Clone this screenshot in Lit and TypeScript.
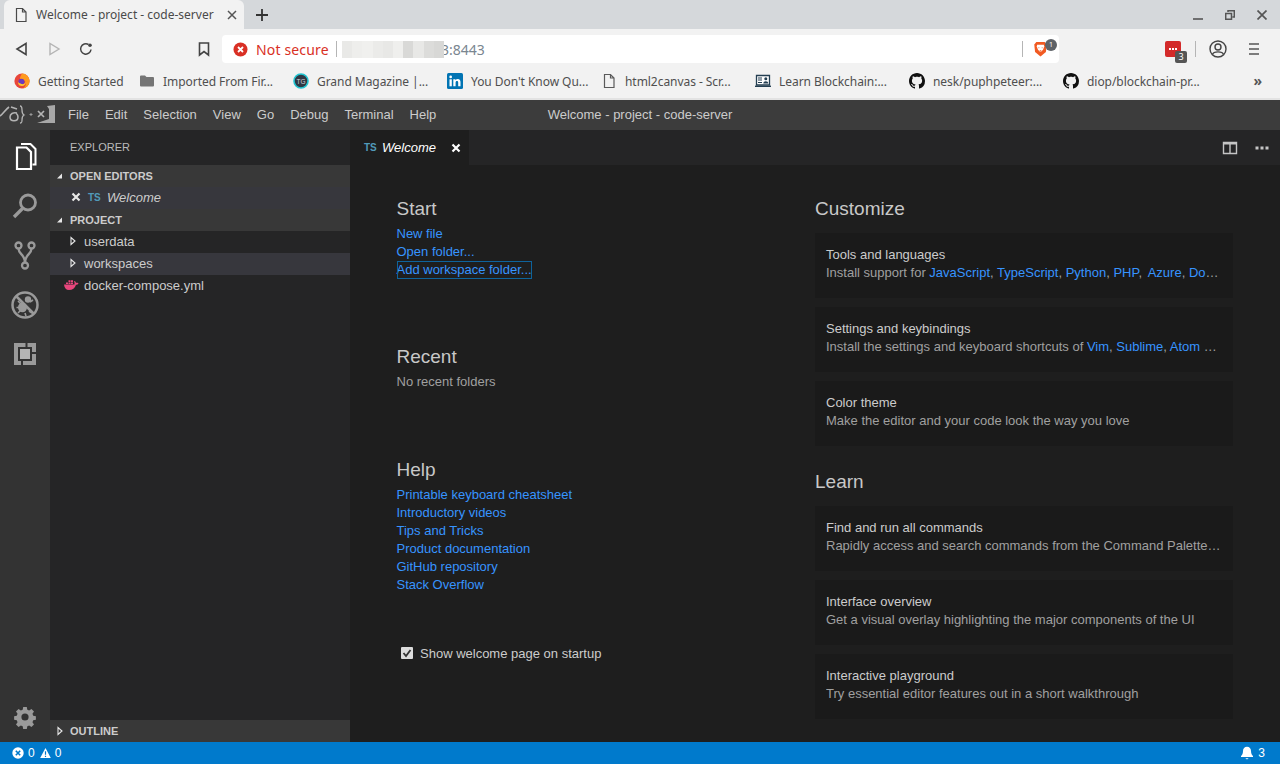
import { LitElement, html, css, svg } from "lit";
import { customElement } from "lit/decorators.js";

const GH = "M8 0C3.58 0 0 3.58 0 8c0 3.54 2.29 6.53 5.47 7.59.4.07.55-.17.55-.38 0-.19-.01-.82-.01-1.49-2.01.37-2.53-.49-2.69-.94-.09-.23-.48-.94-.82-1.13-.28-.15-.68-.52-.01-.53.63-.01 1.08.58 1.23.82.72 1.21 1.87.87 2.33.66.07-.52.28-.87.51-1.07-1.78-.2-3.64-.89-3.64-3.95 0-.87.31-1.59.82-2.15-.08-.2-.36-1.02.08-2.12 0 0 .67-.21 2.2.82.64-.18 1.32-.27 2-.27.68 0 1.36.09 2 .27 1.53-1.04 2.2-.82 2.2-.82.44 1.1.16 1.92.08 2.12.51.56.82 1.27.82 2.15 0 3.07-1.87 3.75-3.65 3.95.29.25.54.73.54 1.48 0 1.07-.01 1.93-.01 2.2 0 .21.15.46.55.38A8.013 8.013 0 0016 8c0-4.42-3.58-8-8-8z";

const doc = (c = "#5a5a5a") => html`<svg width="16" height="16" viewBox="0 0 16 16"><path d="M3.500 1.500h6l3.500 3.500v9.500h-9.500zM9.500 1.500v3.500h3.500" fill="none" stroke=${c} stroke-width="1.200"/></svg>`;

const bmIcons = [
  html`<svg width="16" height="16" viewBox="0 0 16 16"><circle cx="8" cy="8" r="7.600" fill="#e8463a"/><path d="M8 .4a7.600 7.600 0 0 1 7.600 7.600A7.600 7.600 0 0 1 9 15.500C13 13 12.500 8 9 6.500 8 6 6.800 6.500 6 5.500 6 3.500 7 2 8 .4z" fill="#ff9a1f"/><circle cx="7.400" cy="8.800" r="3" fill="#6a3bc0"/><path d="M4 9c0 3 2 4 4 4s4-2 4-4.500c-1 2-2.500 3-4.500 2.500C6 10.500 5 10 4 9z" fill="#ffcb2e"/></svg>`,
  html`<svg width="16" height="16" viewBox="0 0 16 16"><path d="M1 3.500a1 1 0 0 1 1-1h4l1.500 1.500H14a1 1 0 0 1 1 1v7.500a1 1 0 0 1-1 1H2a1 1 0 0 1-1-1z" fill="#757575"/></svg>`,
  html`<svg width="16" height="16" viewBox="0 0 16 16"><circle cx="8" cy="8" r="7" fill="#2f3844" stroke="#21c4d0" stroke-width="1.600"/><text x="8" y="10.500" text-anchor="middle" font-size="6.500" font-family="Liberation Sans" fill="#cfd4da">TG</text></svg>`,
  html`<svg width="16" height="16" viewBox="0 0 16 16"><rect width="16" height="16" rx="1.500" fill="#0274b3"/><rect x="2.500" y="6.300" width="2.300" height="7" fill="#fff"/><circle cx="3.650" cy="3.900" r="1.350" fill="#fff"/><path d="M6.300 6.300h2.200v1c.5-.8 1.300-1.200 2.300-1.200 2 0 2.700 1.300 2.700 3.200v4h-2.300V9.800c0-1-.3-1.700-1.200-1.700-1 0-1.400.7-1.400 1.700v3.500H6.300z" fill="#fff"/></svg>`,
  doc(),
  html`<svg width="16" height="16" viewBox="0 0 16 16"><path d="M1.500 2.500h13v9.500h-13z" fill="#fff" stroke="#243f52" stroke-width="1.300"/><path d="M0 13.300h16" stroke="#243f52" stroke-width="1.400"/><path d="M3 5h4M3 7h4M3 9.500h4" stroke="#243f52" stroke-width="1.200"/><circle cx="10.800" cy="5.800" r="1.500" fill="#243f52"/><path d="M8.300 10.500c0-3 5-3 5 0z" fill="#243f52"/></svg>`,
  html`<svg width="16" height="16" viewBox="0 0 16 16"><path d=${GH} fill="#111"/></svg>`,
  html`<svg width="16" height="16" viewBox="0 0 16 16"><path d=${GH} fill="#111"/></svg>`,
];
const bookmarks = [
  "Getting Started",
  "Imported From Fir...",
  "Grand Magazine |...",
  "You Don't Know Qu...",
  "html2canvas - Scr...",
  "Learn Blockchain:...",
  "nesk/puphpeteer:...",
  "diop/blockchain-pr...",
];
const blur = ["#e9e9e7", "#eeeeec", "#f0f0ee", "#ebebe9", "#e8e8e6", "#efefed", "#d9d9d7", "#e8e8e6", "#dcdcda", "#d8d8d6"];

const chevR = html`<svg class="chev" width="16" height="16" viewBox="0 0 16 16"><path d="M6 4.500v7l4-3.500z" fill="none" stroke="#e8e8e8" stroke-width="1.100"/></svg>`;
const chevD = html`<svg class="chev" width="16" height="16" viewBox="0 0 16 16"><path d="M11 5.500v5H6z" fill="#e8e8e8"/></svg>`;
const xIcon = (c: string) => html`<svg width="12" height="12" viewBox="0 0 12 12"><path d="M2.500 2.500l7 7M9.500 2.500l-7 7" stroke=${c} stroke-width="2.200"/></svg>`;

const ICON = "#9a9a9a";
const activity = [
  svg`<path d="M9 9.500h9.500l4.500 4.500v17H9z" fill="none" stroke="#fff" stroke-width="2.200"/><path d="M13 6h9.500l5 5v15.500h-3" fill="none" stroke="#fff" stroke-width="2"/>`,
  svg`<circle cx="20" cy="14.500" r="7.500" fill="none" stroke="${ICON}" stroke-width="2.800"/><path d="M14.500 20.500l-8.500 8.500" stroke="${ICON}" stroke-width="3.300"/>`,
  svg`<circle cx="10.500" cy="7.500" r="3" fill="none" stroke="${ICON}" stroke-width="2.300"/><circle cx="23.500" cy="7.500" r="3" fill="none" stroke="${ICON}" stroke-width="2.300"/><circle cx="17" cy="27.500" r="3" fill="none" stroke="${ICON}" stroke-width="2.300"/><path d="M10.500 10.500c0 6 6.500 5.500 6.500 14.500M23.500 10.500c0 6-6.500 5.500-6.500 14.500" fill="none" stroke="${ICON}" stroke-width="2.300"/>`,
  svg`<circle cx="17" cy="17" r="12.500" fill="none" stroke="${ICON}" stroke-width="2.500"/><path d="M8 8l18 18" stroke="${ICON}" stroke-width="2.500"/><ellipse cx="14.500" cy="19.500" rx="4.500" ry="4.800" fill="${ICON}"/><circle cx="20" cy="11.500" r="3.200" fill="${ICON}"/><path d="M10 13l3 3M8.500 19.500h4M10 25l3-3M25 12l-3 2M21 23l3 2M17 25l1 3" stroke="${ICON}" stroke-width="1.600"/>`,
  svg`<rect x="6" y="5" width="22" height="22" fill="${ICON}"/><rect x="10" y="9" width="14" height="14" fill="#333"/><rect x="12" y="11" width="10" height="10" fill="#b4b4b4"/><rect x="17.500" y="5" width="2" height="4" fill="#333"/><rect x="24" y="14" width="4" height="2" fill="#333"/><rect x="13" y="23" width="2" height="4" fill="#333"/>`,
];

@customElement("app-root")
export class AppRoot extends LitElement {
  static styles = css`
    :host { display: block; width: 1280px; height: 764px; overflow: hidden; background: #1e1e1e; }
    * { box-sizing: border-box; }
    .page { display: flex; flex-direction: column; height: 764px; }

    .chrome { font-family: "Noto Sans", "Open Sans", sans-serif; color: #5a5a5a; flex: none; }
    .strip { height: 29px; background: #d5d8db; display: flex; align-items: flex-end; padding-left: 4px; position: relative; }
    .tab { width: 240px; height: 29px; background: #f2f2f2; border-radius: 6px 6px 0 0; display: flex; align-items: center; padding: 0 0 0 9px; font-size: 12px; color: #4a4a4a; }
    .tab .title { margin-left: 7px; width: 191px; white-space: nowrap; }
    .newtab { margin-left: 12px; height: 29px; display: flex; align-items: center; }
    .winbtns { margin-left: auto; display: flex; align-items: center; gap: 22px; height: 29px; padding: 0 13px 0 0; }

    .toolbar { height: 35px; background: #f2f2f2; display: flex; align-items: flex-start; position: relative; }
    .nav { display: flex; align-items: center; width: 222px; height: 28px; margin-top: 6px; padding-left: 14px; }
    .nav svg { margin-right: 16px; flex: none; }
    .nav svg.bm { margin: 0 0 0 86px; }
    .omni { width: 837px; height: 28px; background: #fff; border-radius: 4px; margin-top: 6px; display: flex; align-items: center; padding-left: 11px; font-size: 14px; }
    .notsec { color: #d93025; margin-left: 8px; width: 73px; white-space: nowrap; letter-spacing: 0.15px; }
    .vsep { width: 1px; height: 16px; background: #b5b5b5; flex: none; }
    .omni .vsep { margin-left: 7px; }
    .ip { display: flex; height: 17px; position: relative; z-index: 1; }
    .ip i { display: block; flex: 1; }
    .ipwrap { width: 102px; margin-left: 5px; display: block; }
    .port { color: #7a8690; margin-left: -3px; white-space: nowrap; }
    .omni .shield { margin-left: auto; display: flex; align-items: center; padding-right: 11px; position: relative; }
    .omni .shield .vsep { margin: 0 10px 0 0; }
    .badge1 { position: absolute; right: 2px; top: -1px; width: 12px; height: 12px; border-radius: 50%; background: #5f6368; color: #fff; font-size: 7px; line-height: 12px; text-align: center; }
    .tools { display: flex; align-items: center; height: 28px; margin-top: 6px; margin-left: 106px; }
    .ext { position: relative; width: 16px; height: 16px; background: #d32a2a; border-radius: 2px; display: flex; align-items: center; justify-content: center; gap: 1px; }
    .ext b { width: 2px; height: 2px; background: #fff; display: block; }
    .badge3 { position: absolute; left: 10px; top: 10px; width: 12px; height: 12px; background: #555; border-radius: 2px; color: #fff; font-size: 9px; line-height: 12px; text-align: center; }
    .tools .vsep { margin-left: 14px; }
    .tools .acct { margin-left: 13px; }
    .tools .menu { margin-left: 22px; }

    .bookmarks { height: 36px; background: #f2f2f2; border-bottom: 2px solid #e3e3e3; display: flex; align-items: center; padding-left: 14px; font-size: 12px; color: #4f4f4f; position: relative; }
    .bm-item { display: flex; align-items: center; gap: 8px; white-space: nowrap; width: 154px; flex: none; letter-spacing: -0.05px; }
    .bm-item:first-child { width: 125px; }
    .bm-more { position: absolute; right: 18px; top: 9px; font-size: 14px; font-weight: 700; color: #555; line-height: 16px; }

    .vs { flex: 1; min-height: 0; display: flex; flex-direction: column; font-family: "Liberation Sans", Arial, sans-serif; font-size: 13px; color: #ccc; }
    .titlebar { height: 30px; background: #3c3c3c; display: flex; align-items: center; padding-bottom: 2px; position: relative; flex: none; }
    .logo { width: 60px; height: 30px; flex: none; display: block; align-self: flex-start; }
    .mi { padding: 0 8px; color: #ccc; }
    .wtitle { position: absolute; left: 0; right: 0; text-align: center; color: #ccc; pointer-events: none; }
    .body { flex: 1; min-height: 0; display: flex; }
    .activity { width: 50px; background: #333; display: flex; flex-direction: column; align-items: center; padding-top: 8px; gap: 16px; flex: none; }
    .activity svg { display: block; }
    .activity .gear { margin-top: auto; margin-bottom: 13px; }
    .sidebar { width: 300px; background: #252526; display: flex; flex-direction: column; flex: none; }
    .sb-head { height: 35px; padding: 0 0 2px 20px; display: flex; align-items: center; font-size: 11px; color: #bbb; flex: none; }
    .sec { height: 22px; background: #383838; display: flex; align-items: center; font-size: 11px; font-weight: 700; color: #ccc; flex: none; padding-left: 1px; }
    .sec span { margin-left: 3px; }
    .sec.outline { padding-left: 2px; }
    .sec.outline span { margin-left: 2px; }
    .row { height: 22px; padding-bottom: 2px; display: flex; align-items: center; flex: none; white-space: nowrap; }
    .row.open { padding-left: 20px; background: #37373d; font-style: italic; color: #ccc; }
    .row.open .ts { margin: 0 6px 0 6px; font-style: normal; }
    .row.tree { padding-left: 15px; }
    .row.tree .chev { margin-right: 3px; }
    .row.hl { background: #37373d; }
    .row.file { padding-left: 14px; gap: 5px; }
    .ts { color: #519aba; font-size: 10px; font-weight: 700; width: 13px; }
    .spacer { flex: 1; }

    .editor { flex: 1; min-width: 0; display: flex; flex-direction: column; background: #1e1e1e; }
    .tabbar { height: 35px; background: #252526; display: flex; align-items: stretch; flex: none; }
    .etab { width: 119px; background: #1e1e1e; display: flex; align-items: center; padding-left: 14px; font-style: italic; color: #fff; }
    .etab .ts { margin-right: 5px; font-style: normal; }
    .etab svg { margin-left: 14px; }
    .actions { margin-left: auto; display: flex; align-items: center; gap: 16px; padding-right: 10px; }
    .welcome { flex: 1; display: grid; grid-template-columns: 418.5px 418px; padding-left: 46.500px; }
    h2 { font-weight: 400; font-size: 19px; line-height: 24px; padding-top: 1px; margin: 0; color: #c8c8c8; }
    .left section { display: flex; flex-direction: column; align-items: flex-start; }
    .left .start { padding-top: 31px; height: 179px; }
    .left .recent { height: 113px; }
    .left .help { height: 172px; padding-bottom: 0; margin-bottom: 15px; }
    .left h2 { margin-bottom: 4px; }
    a { color: #3794ff; line-height: 18px; text-decoration: none; display: block; height: 18px; white-space: nowrap; }
    .focus { outline: 1px solid #0e639c; outline-offset: -1px; }
    .muted { color: #a0a0a0; line-height: 18px; }
    .check { display: flex; align-items: center; height: 18px; padding-left: 4.500px; gap: 7px; color: #ccc; }
    .cb { width: 12px; height: 12px; background: #dcdcdc; border-radius: 1px; display: block; flex: none; }
    .right { padding-top: 31px; width: 418px; }
    .right h2 { margin-bottom: 12px; }
    .card { height: 65px; background: #1a1a1a; margin-bottom: 9px; padding: 13px 11px 0; }
    .card .t { line-height: 18px; color: #ccc; }
    .card .s { line-height: 18px; color: #a0a0a0; white-space: nowrap; overflow: hidden; text-overflow: ellipsis; }
    .card .s a { display: inline; }
    .card .s a.az { margin-left: 2px; }
    .right h2.learn { margin-top: 23px; }
    .status { height: 22px; background: #007acc; color: #fff; display: flex; align-items: center; font-size: 12px; flex: none; padding: 0 15px 0 12px; gap: 4px; }
    .status .n { margin-right: 1px; }
    .status .bell { margin-left: auto; }
  `;

  card(t: unknown, s: unknown) {
    return html`<div class="card"><div class="t">${t}</div><div class="s">${s}</div></div>`;
  }

  render() {
    return html`<div class="page">
      <div class="chrome">
        <div class="strip">
          <div class="tab">
            ${doc("#4a4a4a")}
            <span class="title">Welcome - project - code-server</span>
            <svg width="10" height="10" viewBox="0 0 10 10"><path d="M1 1l8 8M9 1l-8 8" stroke="#555" stroke-width="1.500"/></svg>
          </div>
          <div class="newtab"><svg width="12" height="12" viewBox="0 0 12 12"><path d="M6 0v12M0 6h12" stroke="#333" stroke-width="1.800"/></svg></div>
          <div class="winbtns">
            <svg width="10" height="10" viewBox="0 0 10 10"><path d="M0 9h10" stroke="#555" stroke-width="1.600"/></svg>
            <svg width="10" height="10" viewBox="0 0 10 10"><path d="M.7 3.500h5.800v5.800H.7zM3 2V.7h6.300V7H7.500" fill="none" stroke="#555" stroke-width="1.500"/></svg>
            <svg width="10" height="10" viewBox="0 0 10 10"><path d="M.5.500l9 9M9.500.500l-9 9" stroke="#555" stroke-width="1.700"/></svg>
          </div>
        </div>
        <div class="toolbar">
          <div class="nav">
            <svg width="16" height="16" viewBox="0 0 16 16"><path d="M12 2.500v11L3 8z" fill="none" stroke="#444" stroke-width="1.600"/></svg>
            <svg width="16" height="16" viewBox="0 0 16 16"><path d="M4 2.500v11L13 8z" fill="none" stroke="#b5b5b5" stroke-width="1.400"/></svg>
            <svg width="16" height="16" viewBox="0 0 16 16"><path d="M13 8.500A5.200 5.200 0 1 1 10.500 3.500" fill="none" stroke="#444" stroke-width="1.500"/><circle cx="12" cy="4.200" r="1.800" fill="#444"/></svg>
            <svg class="bm" width="16" height="16" viewBox="0 0 16 16"><path d="M3.500 2h9v12L8 10.500 3.500 14z" fill="none" stroke="#444" stroke-width="1.600"/></svg>
          </div>
          <div class="omni">
            <svg width="15" height="15" viewBox="0 0 15 15"><circle cx="7.500" cy="7.500" r="7" fill="#d93025"/><path d="M5 5l5 5M10 5l-5 5" stroke="#fff" stroke-width="1.800"/></svg>
            <span class="notsec">Not secure</span>
            <span class="vsep"></span>
            <span class="ipwrap"><span class="ip">${blur.map((c) => html`<i style="background:${c}"></i>`)}</span></span>
            <span class="port">3:8443</span>
            <div class="shield">
              <span class="vsep"></span>
              <svg width="15" height="18" viewBox="0 0 18 20"><path d="M4 1.500h10l2.500 3-1 9L9 19l-6.500-5.500-1-9z" fill="#f15a22"/><path d="M5 5h8l.5 2-1.500 4-2 2H8l-2-2-1.500-4z" fill="#fff"/><path d="M7 8v1M11 8v1M8 12h2" stroke="#f15a22" stroke-width="1"/></svg>
              <span class="badge1">1</span>
            </div>
          </div>
          <div class="tools">
            <span class="ext"><b></b><b></b><b></b><span class="badge3">3</span></span>
            <span class="vsep"></span>
            <svg class="acct" width="18" height="18" viewBox="0 0 18 18"><circle cx="9" cy="9" r="8" fill="none" stroke="#444" stroke-width="1.400"/><circle cx="9" cy="7" r="3" fill="none" stroke="#444" stroke-width="1.400"/><path d="M3.500 14.500c1-3.500 10-3.500 11 0" fill="none" stroke="#444" stroke-width="1.400"/></svg>
            <svg class="menu" width="10" height="14" viewBox="0 0 10 14"><path d="M0 2h10M0 7h10M0 12h10" stroke="#555" stroke-width="1.600"/></svg>
          </div>
        </div>
        <div class="bookmarks">
          ${bookmarks.map((b, i) => html`<div class="bm-item">${bmIcons[i]}<span>${b}</span></div>`)}
          <span class="bm-more">»</span>
        </div>
      </div>

      <div class="vs">
        <div class="titlebar">
          <svg class="logo" viewBox="0 0 60 30">
            <path d="M0 16c3-2 5-6 9-9" fill="none" stroke="#b4b4b4" stroke-width="1.600"/>
            <path d="M11 7l6 2M17 13c-4-1-7 1-7 4 0 5 8 5 8 0 0-2-1-3-2-4" fill="none" stroke="#b4b4b4" stroke-width="1.500"/>
            <path d="M20 6c2 0 2 2 2 4s0 4 2 5c-2 1-2 3-2 5s0 3-2 3" fill="none" stroke="#b4b4b4" stroke-width="1.300"/>
            <path d="M29.500 14.500h3M31 13v3" stroke="#999" stroke-width="1"/>
            <path d="M38 11l6 6M38 17l6-6" stroke="#b4b4b4" stroke-width="1.700"/>
            <path d="M47 6l8-1v18H37l9-3 3-1V9z" fill="#a8a8a8"/>
          </svg>
          ${["File", "Edit", "Selection", "View", "Go", "Debug", "Terminal", "Help"].map((m) => html`<span class="mi">${m}</span>`)}
          <span class="wtitle">Welcome - project - code-server</span>
        </div>
        <div class="body">
          <div class="activity">
            ${activity.map((a) => html`<svg width="34" height="34" viewBox="0 0 34 34">${a}</svg>`)}
            <svg class="gear" width="24" height="24" viewBox="0 0 24 24"><path d="M10 1h4l.6 3 2 .8 2.600-1.700 2.800 2.800-1.700 2.600.8 2 3 .6v4l-3 .6-.8 2 1.700 2.600-2.800 2.800-2.600-1.700-2 .8-.6 3h-4l-.6-3-2-.8-2.600 1.700-2.800-2.800 1.700-2.600-.8-2-3-.6v-4l3-.6.8-2-1.700-2.600 2.800-2.800 2.600 1.700 2-.8z M12 8a4 4 0 1 0 0 8 4 4 0 0 0 0-8z" fill="#9a9a9a" fill-rule="evenodd" transform="translate(1.200 1.200) scale(.9)"/></svg>
          </div>
          <div class="sidebar">
            <div class="sb-head">EXPLORER</div>
            <div class="sec">${chevD}<span>OPEN EDITORS</span></div>
            <div class="row open">${xIcon("#e8e8e8")}<span class="ts">TS</span>Welcome</div>
            <div class="sec">${chevD}<span>PROJECT</span></div>
            <div class="row tree">${chevR}userdata</div>
            <div class="row tree hl">${chevR}workspaces</div>
            <div class="row file">
              <svg width="15" height="12" viewBox="0 0 15 12"><path d="M0 5.500h10.500c.3-1.200 0-2.300-.6-3l1-.5c.7.600 1 1.200 1.100 1.900.7-.2 1.500-.2 2.500.3-.5 1-1.500 1.500-2.500 1.500C11 9 8.500 11 5 11 2 11 .3 9 0 5.500z" fill="#e8467c"/><path d="M2 3.500h2v1.500H2zM4.500 3.500h2v1.500h-2zM7 3.500h2v1.500H7zM4.500 1.200h2v1.800h-2zM7 1.200h2v1.800H7z" fill="#e8467c"/></svg>
              docker-compose.yml
            </div>
            <div class="spacer"></div>
            <div class="sec outline">${chevR}<span>OUTLINE</span></div>
          </div>
          <div class="editor">
            <div class="tabbar">
              <div class="etab"><span class="ts">TS</span>Welcome${xIcon("#fff")}</div>
              <div class="actions">
                <svg width="16" height="16" viewBox="0 0 16 16"><path d="M1.500 2.500h13v11h-13zM8 4v10" fill="none" stroke="#c5c5c5" stroke-width="1.400"/><path d="M1 2h14v2.500H1z" fill="#c5c5c5"/></svg>
                <svg width="16" height="16" viewBox="0 0 16 16"><path d="M1.500 6.500h3v3h-3zM6.500 6.500h3v3h-3zM11.500 6.500h3v3h-3z" fill="#c5c5c5"/></svg>
              </div>
            </div>
            <div class="welcome">
              <div class="left">
                <section class="start">
                  <h2>Start</h2>
                  <a>New file</a><a>Open folder...</a><a class="focus">Add workspace folder...</a>
                </section>
                <section class="recent"><h2>Recent</h2><div class="muted">No recent folders</div></section>
                <section class="help">
                  <h2>Help</h2>
                  <a>Printable keyboard cheatsheet</a><a>Introductory videos</a><a>Tips and Tricks</a><a>Product documentation</a><a>GitHub repository</a><a>Stack Overflow</a>
                </section>
                <div class="check">
                  <span class="cb"><svg width="12" height="12" viewBox="0 0 12 12"><path d="M2.500 6l2.500 3 4.500-6" fill="none" stroke="#333" stroke-width="1.800"/></svg></span>
                  Show welcome page on startup
                </div>
              </div>
              <div class="right">
                <h2>Customize</h2>
                ${this.card("Tools and languages", html`Install support for <a>JavaScript</a>, <a>TypeScript</a>, <a>Python</a>, <a>PHP</a>, <a class="az">Azure</a>, <a>Docker and more</a>`)}
                ${this.card("Settings and keybindings", html`Install the settings and keyboard shortcuts of <a>Vim</a>, <a>Sublime</a>, <a>Atom and others</a>`)}
                ${this.card("Color theme", "Make the editor and your code look the way you love")}
                <h2 class="learn">Learn</h2>
                ${this.card("Find and run all commands", "Rapidly access and search commands from the Command Palette (Ctrl+Shift+P)")}
                ${this.card("Interface overview", "Get a visual overlay highlighting the major components of the UI")}
                ${this.card("Interactive playground", "Try essential editor features out in a short walkthrough")}
              </div>
            </div>
          </div>
        </div>
        <div class="status">
          <svg width="12" height="12" viewBox="0 0 12 12"><circle cx="6" cy="6" r="5.700" fill="#fff"/><path d="M3.800 3.800l4.400 4.400M8.200 3.800L3.800 8.200" stroke="#007acc" stroke-width="1.600"/></svg>
          <span class="n">0</span>
          <svg width="11" height="12" viewBox="0 0 12 12"><path d="M6 .5l5.800 11H.2z" fill="#fff"/><path d="M6 4v4M6 9v1.300" stroke="#007acc" stroke-width="1.300"/></svg>
          <span class="n">0</span>
          <svg class="bell" width="14" height="14" viewBox="0 0 14 14"><path d="M7 .8c-2.500 0-4 1.800-4 4.200 0 2.800-1 4-2 5v1h12v-1c-1-1-2-2.200-2-5 0-2.400-1.500-4.200-4-4.200zM5.300 12.200h3.400L7 13.600z" fill="#fff"/></svg>
          <span>3</span>
        </div>
      </div>
    </div>`;
  }
}
